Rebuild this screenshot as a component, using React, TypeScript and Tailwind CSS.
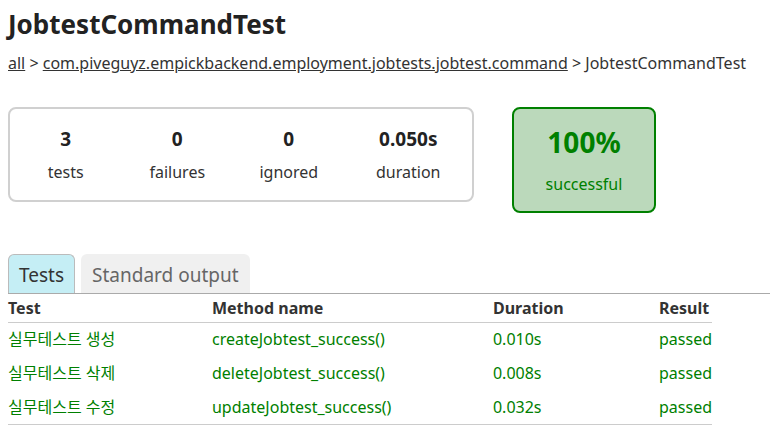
import React from "react";

const rows = [
  { name: "실무테스트 생성", method: "createJobtest_success()", dur: "0.010s" },
  { name: "실무테스트 삭제", method: "deleteJobtest_success()", dur: "0.008s" },
  { name: "실무테스트 수정", method: "updateJobtest_success()", dur: "0.032s" },
];

export default function App() {
  return (
    <div
      className="w-[770px] h-[440px] bg-white text-[#333] pl-[8px] pt-[6px] overflow-hidden"
      style={{ fontFamily: "'Noto Sans', 'Noto Sans CJK KR', sans-serif" }}
    >
      <h1 className="text-[26px] font-bold text-[#222] leading-[36px]">JobtestCommandTest</h1>
      <div className="mt-[11px] text-[16px] leading-[20px] text-[#333]">
        <span className="underline">all</span> &gt;{" "}
        <span className="underline">com.piveguyz.empickbackend.employment.jobtests.jobtest.command</span> &gt; JobtestCommandTest
      </div>
      <div className="flex items-start mt-[34px]">
        <div className="w-[466px] h-[95px] border-2 border-[#d0d0d0] rounded-[8px] flex items-center">
          {[
            ["3", "tests", "w-[112px]"],
            ["0", "failures", "w-[112px]"],
            ["0", "ignored", "w-[112px]"],
            ["0.050s", "duration", "w-[128px]"],
          ].map(([v, l, w]) => (
            <div key={l} className={`${w} flex flex-col items-center`}>
              <div className="text-[19px] font-bold text-[#222] leading-[24px]">{v}</div>
              <div className="text-[16px] leading-[20px] mt-[11px] text-[#333]">{l}</div>
            </div>
          ))}
        </div>
        <div className="ml-[38px] w-[144px] h-[106px] border-2 border-[#008000] bg-[#bbd9bb] rounded-[8px] flex flex-col items-center justify-center">
          <div className="text-[28px] font-bold text-[#008000] leading-[34px] -mt-[2px]">100%</div>
          <div className="text-[16px] text-[#008000] leading-[20px] mt-[15px]">successful</div>
        </div>
      </div>
      <div className="mt-[41px] flex items-end border-b border-[#aaa] gap-[6px]">
        <div className="h-[39px] px-[10px] pt-[3px] flex items-center bg-[#c5eef5] border border-b-0 border-[#bbb] rounded-t-[6px] text-[19px] text-[#333]">
          Tests
        </div>
        <div className="h-[39px] px-[11px] pt-[3px] flex items-center bg-[#f0f0f0] rounded-t-[6px] text-[19px] text-[#666]">
          Standard output
        </div>
      </div>
      <table className="w-[704px] border-collapse text-[16px] mt-[1px]">
        <thead>
          <tr className="border-b border-[#ccc]">
            <th className="text-left font-bold text-[#333] w-[204px] h-[27px] p-0">Test</th>
            <th className="text-left font-bold text-[#333] w-[281px] p-0">Method name</th>
            <th className="text-left font-bold text-[#333] w-[166px] p-0">Duration</th>
            <th className="text-left font-bold text-[#333] p-0">Result</th>
          </tr>
        </thead>
        <tbody>
          {rows.map((r, i) => (
            <tr key={i} className={i === rows.length - 1 ? "border-b border-[#ccc]" : ""}>
              <td className="h-[34px] p-0 text-[#008000]">{r.name}</td>
              <td className="p-0 text-[#008000]">{r.method}</td>
              <td className="p-0 text-[#008000]">{r.dur}</td>
              <td className="p-0 text-[#008000]">passed</td>
            </tr>
          ))}
        </tbody>
      </table>
    </div>
  );
}
